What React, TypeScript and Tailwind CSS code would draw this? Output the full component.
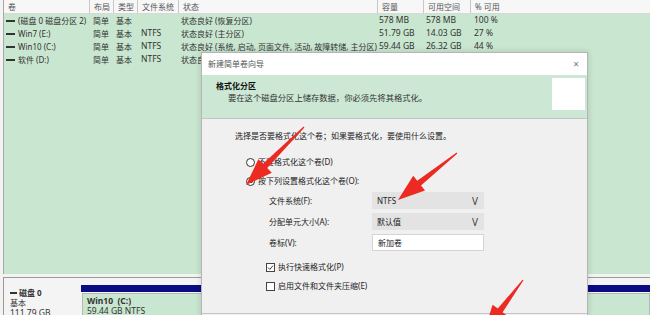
import React from 'react';

const font = { fontFamily: '"Noto Sans", "Noto Sans CJK SC", sans-serif' };

interface VolumeRow {
  name: string;
  layout: string;
  type: string;
  fs: string;
  status: string;
  size: string;
  free: string;
  pct: string;
}

const rows: VolumeRow[] = [
  { name: '(磁盘 0 磁盘分区 2)', layout: '简单', type: '基本', fs: '', status: '状态良好 (恢复分区)', size: '578 MB', free: '578 MB', pct: '100 %' },
  { name: 'Win7 (E:)', layout: '简单', type: '基本', fs: 'NTFS', status: '状态良好 (主分区)', size: '51.79 GB', free: '14.03 GB', pct: '27 %' },
  { name: 'Win10 (C:)', layout: '简单', type: '基本', fs: 'NTFS', status: '状态良好 (系统, 启动, 页面文件, 活动, 故障转储, 主分区)', size: '59.44 GB', free: '26.32 GB', pct: '44 %' },
  { name: '软件 (D:)', layout: '简单', type: '基本', fs: 'NTFS', status: '状态良好 (主分区)', size: '', free: '', pct: '' },
];

const cols = 'grid grid-cols-[85px_24px_24px_41px_199px_46px_47px_1fr]';

function Arrow({ tail, tip, head = 27, half = 9.5, shaft = 3 }: { tail: [number, number]; tip: [number, number]; head?: number; half?: number; shaft?: number }) {
  const dx = tip[0] - tail[0];
  const dy = tip[1] - tail[1];
  const len = Math.hypot(dx, dy);
  const ux = dx / len, uy = dy / len;
  const px = uy, py = -ux;
  const bx = tip[0] - ux * head, by = tip[1] - uy * head;
  const pts = [
    [tail[0] + px * 0.6, tail[1] + py * 0.6],
    [bx + px * shaft, by + py * shaft],
    [bx + px * half, by + py * half],
    tip,
    [bx - px * half, by - py * half],
    [bx - px * shaft, by - py * shaft],
    [tail[0] - px * 0.6, tail[1] - py * 0.6],
  ];
  return <polygon points={pts.map(p => p.join(',')).join(' ')} fill="#ec2a22" />;
}

function Select({ value }: { value: string }) {
  return (
    <div className="w-[112px] h-[17px] bg-[#e3e3e3] flex items-center justify-between pl-[5px] pr-[6px] text-[8px] text-[#222]">
      <span>{value}</span>
      <span className="text-[10px] text-[#444] leading-none">V</span>
    </div>
  );
}

export default function App() {
  return (
    <div className="relative w-[650px] h-[315px] overflow-hidden bg-[#f3f3f3] text-[#333]" style={font}>
      {/* volume list */}
      <div className="ml-[3px] border-l border-[#a8a8a8] h-[274px] bg-[#c9e6d0] flex flex-col">
        <div className={`${cols} h-[14px] bg-[#f7f7f7] border-b border-[#d8d8d8] text-[8px] text-[#555] items-center`}>
          {['卷', '布局', '类型', '文件系统', '状态', '容量', '可用空间', '% 可用'].map((h, i) => (
            <div key={h} className={`h-full flex items-center pl-[4px] ${i > 0 ? 'border-l border-[#c8c8c8]' : ''}`}>{h}</div>
          ))}
        </div>
        {rows.map(r => (
          <div key={r.name} className={`${cols} h-[13px] items-center text-[8px] text-[#333]`}>
            <div className="flex items-center gap-[3px] pl-[2px]">
              <span className="w-[9px] h-[2px] bg-[#333]" />
              <span className="whitespace-nowrap">{r.name}</span>
            </div>
            <div className="pl-[4px]">{r.layout}</div>
            <div className="pl-[3px]">{r.type}</div>
            <div className="pl-[4px] text-[8.5px]">{r.fs}</div>
            <div className="pl-[3px] whitespace-nowrap overflow-hidden">{r.status}</div>
            <div className="pl-[2px] text-[8.5px]">{r.size}</div>
            <div className="pl-[3px] text-[8.5px]">{r.free}</div>
            <div className="pl-[4px] text-[8.5px]">{r.pct}</div>
          </div>
        ))}
      </div>

      {/* disk map */}
      <div className="mt-[3px] ml-[3px] border-t border-l border-[#9a9a9a] h-[40px] bg-[#f4f4f4] flex">
        <div className="w-[77px] pt-[10px] pl-[6px] flex flex-col text-[8px] leading-[10px] text-[#333]">
          <div className="flex items-center gap-[2px] font-bold">
            <span className="w-[7px] h-[2px] bg-[#333]" />
            <span>磁盘 0</span>
          </div>
          <span>基本</span>
          <span className="text-[8.5px]">111.79 GB</span>
        </div>
        <div className="flex-1 pt-[7px] flex flex-col">
          <div className="h-[8px] bg-[#0b0b82]" />
          <div className="flex-1 mt-[1px] ml-[1px] border border-[#b8b8b8] bg-[#c9e6d0] pl-[4px] pt-[2px] text-[8.5px] leading-[10px]">
            <div className="font-bold">Win10&nbsp; (C:)</div>
            <div>59.44 GB NTFS</div>
          </div>
        </div>
      </div>

      {/* wizard window */}
      <div className="absolute left-[201px] top-[52px] w-[387px] h-[275px] bg-[#f0f0f0] border border-[#b5b5b5] shadow-[0_0_6px_rgba(0,0,0,0.15)] flex flex-col">
        <div className="h-[22px] bg-white flex items-center justify-between pl-[6px] pr-[8px] text-[8px] text-[#555]">
          <span>新建简单卷向导</span>
          <span className="text-[10px] text-[#777]">×</span>
        </div>
        <div className="h-[44px] bg-[#cce8d4] border-b border-[#c4c4c4] flex justify-between">
          <div className="pl-[14px] pt-[5px] flex flex-col text-[8px] leading-[12px]">
            <span className="font-bold text-[#111]">格式化分区</span>
            <span className="pl-[12px] text-[#333] text-[8.3px]">要在这个磁盘分区上储存数据，你必须先将其格式化。</span>
          </div>
          <div className="w-[33px] h-[32px] bg-white mt-[3px] mr-[2px]" />
        </div>
        <div className="flex flex-col pl-[33px] pt-[11px] text-[8px] text-[#222] h-[195px] border-b border-[#c4c4c4]">
          <span className="leading-[12px]">选择是否要格式化这个卷；如果要格式化，要使用什么设置。</span>
          <div className="mt-[14px] pl-[11px] flex flex-col gap-[7px]">
            <div className="flex items-center gap-[3px] h-[12px]">
              <span className="w-[9px] h-[9px] rounded-full border border-[#333] bg-white" />
              <span>不要格式化这个卷(D)</span>
            </div>
            <div className="flex items-center gap-[3px] h-[12px]">
              <span className="w-[9px] h-[9px] rounded-full border border-[#333] bg-white flex items-center justify-center">
                <span className="w-[4px] h-[4px] rounded-full bg-[#111]" />
              </span>
              <span>按下列设置格式化这个卷(O):</span>
            </div>
          </div>
          <div className="mt-[5px] pl-[34px] flex flex-col gap-[4px]">
            <div className="flex items-center">
              <span className="w-[103px]">文件系统(F):</span>
              <Select value="NTFS" />
            </div>
            <div className="flex items-center">
              <span className="w-[103px]">分配单元大小(A):</span>
              <Select value="默认值" />
            </div>
            <div className="flex items-center">
              <span className="w-[103px]">卷标(V):</span>
              <div className="w-[112px] h-[17px] bg-white border border-[#d4d4d4] flex items-center pl-[5px]">新加卷</div>
            </div>
          </div>
          <div className="mt-[10px] pl-[31px] flex flex-col gap-[7px]">
            <div className="flex items-center gap-[3px] h-[12px]">
              <span className="w-[9px] h-[9px] border border-[#444] bg-white flex items-center justify-center">
                <svg width="7" height="7" viewBox="0 0 7 7"><path d="M1 3.6 L2.8 5.4 L6 1.6" stroke="#222" strokeWidth="0.9" fill="none" /></svg>
              </span>
              <span>执行快速格式化(P)</span>
            </div>
            <div className="flex items-center gap-[3px] h-[12px]">
              <span className="w-[9px] h-[9px] border border-[#444] bg-white" />
              <span>启用文件和文件夹压缩(E)</span>
            </div>
          </div>
        </div>
      </div>

      {/* annotation arrows */}
      <svg className="absolute inset-0 pointer-events-none" width="650" height="315">
        <Arrow tail={[304, 127]} tip={[246, 185]} />
        <Arrow tail={[457, 153]} tip={[398, 200]} />
        <Arrow tail={[523, 280]} tip={[484, 332]} />
      </svg>
    </div>
  );
}
